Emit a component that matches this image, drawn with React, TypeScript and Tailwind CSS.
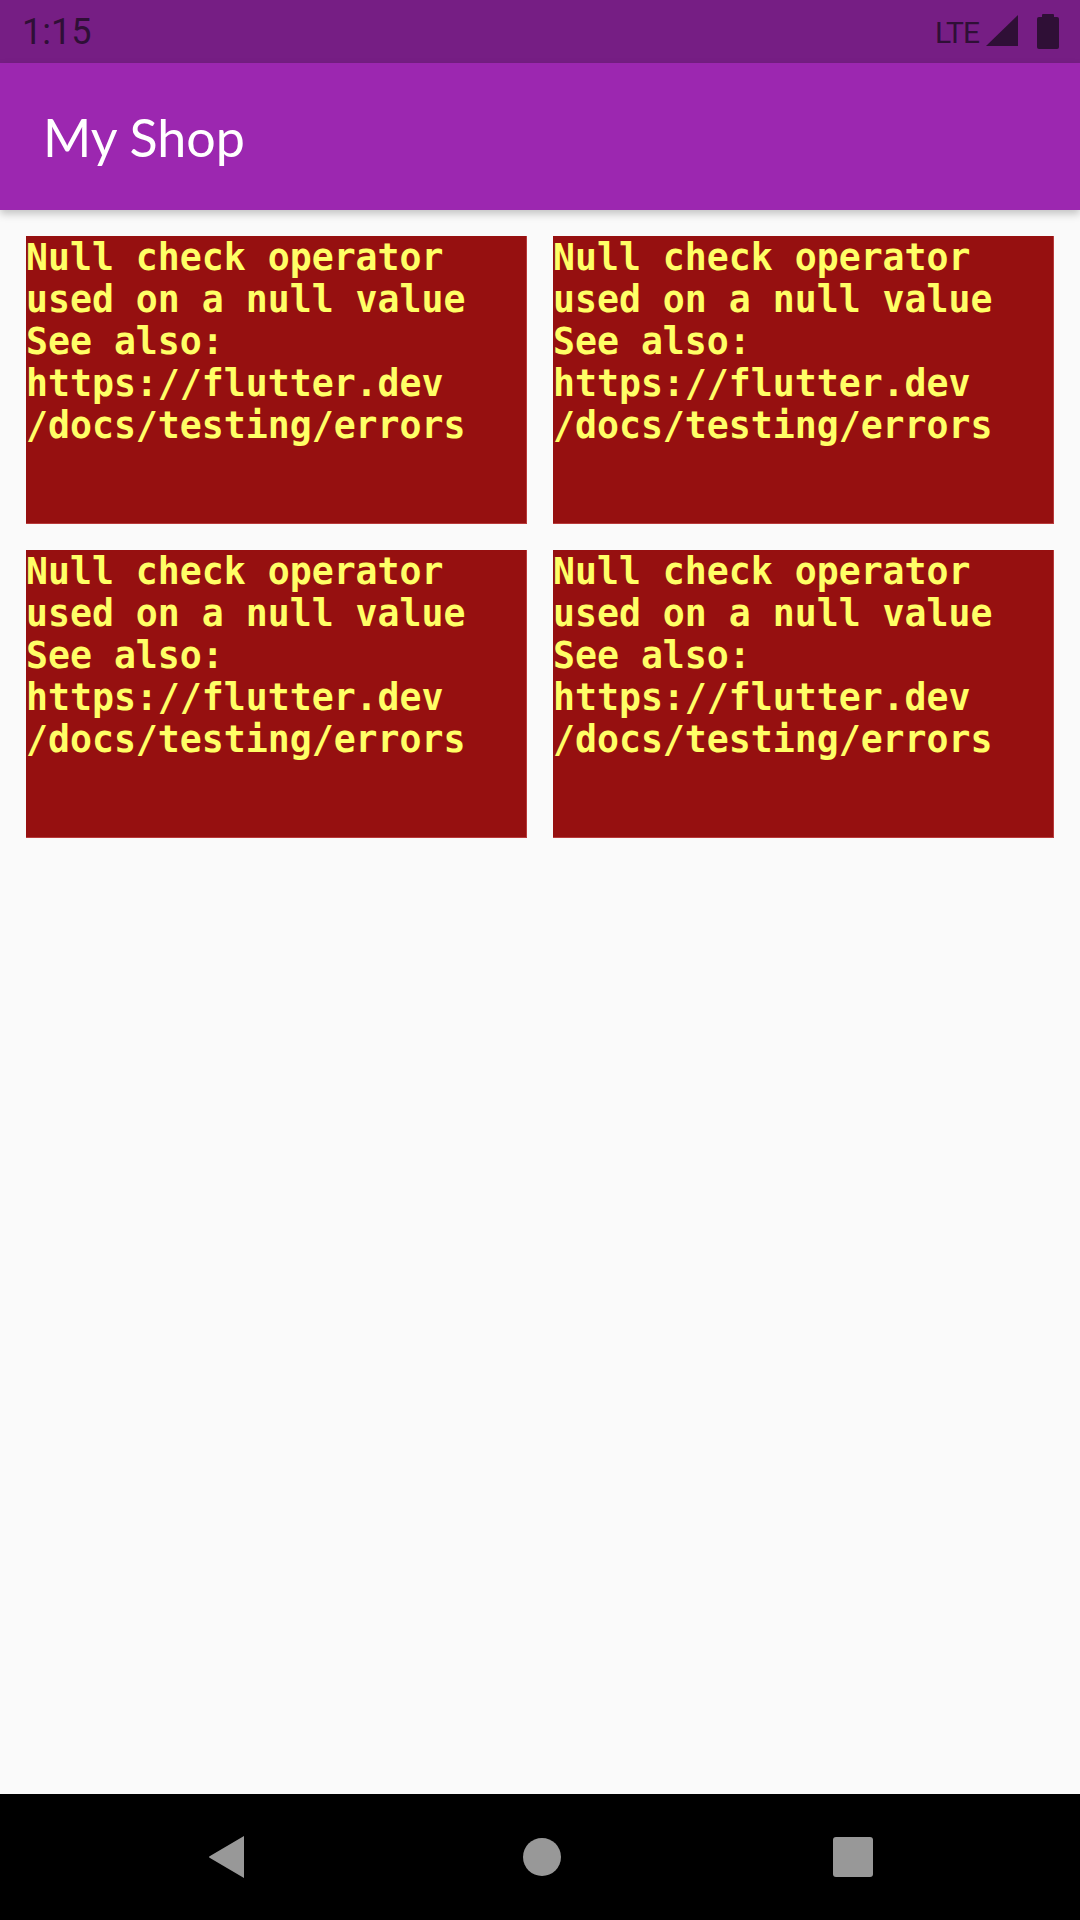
import React from 'react';

const ERROR_TEXT = [
  'Null check operator',
  'used on a null value',
  'See also:',
  'https://flutter.dev',
  '/docs/testing/errors',
];

function ErrorCard() {
  return (
    <div className="h-[288px] bg-[#961010] border-r border-b border-[#b83a3a] overflow-hidden">
      <div
        className="text-[36.5px] leading-[34px] pt-[1px] font-bold text-[#ffff66] whitespace-pre"
        style={{ fontFamily: '"DejaVu Sans Mono", "Liberation Mono", monospace' }}
      >
        {ERROR_TEXT.map((line) => (
          <div key={line} className="h-[42px] flex items-center">
            {line}
          </div>
        ))}
      </div>
    </div>
  );
}

export default function App() {
  return (
    <div className="w-[1080px] h-[1920px] flex flex-col bg-[#fafafa] overflow-hidden">
      {/* status bar */}
      <div className="h-[63px] bg-[#761e84] flex items-center justify-between pl-[22px] pr-[21px] text-[#2f0f36]">
        <span className="text-[36px] leading-none" style={{ fontFamily: 'Roboto, sans-serif' }}>
          1:15
        </span>
        <div className="flex items-center gap-[6px]">
          <span className="text-[30px] leading-none tracking-[-1px] mt-[2px]" style={{ fontFamily: 'Roboto, sans-serif' }}>
            LTE
          </span>
          <svg width="34" height="32" viewBox="0 0 34 32" className="mb-[1px]">
            <path d="M33 0 L33 31 L1 31 Z" fill="#2f0f36" />
          </svg>
          <svg width="22" height="35" viewBox="0 0 22 35" className="ml-[12px]">
            <rect x="5" y="0" width="12" height="5" rx="1" fill="#2f0f36" />
            <rect x="0" y="3" width="22" height="32" rx="2" fill="#2f0f36" />
          </svg>
        </div>
      </div>

      {/* app bar */}
      <div className="h-[147px] bg-[#9c27b0] flex items-center pl-[43px] shadow-[0_4px_8px_rgba(0,0,0,0.22)] z-10">
        <h1 className="text-[52px] text-white leading-none" style={{ fontFamily: 'Lato, sans-serif' }}>
          My Shop
        </h1>
      </div>

      {/* product grid */}
      <div className="flex-1">
        <div className="grid grid-cols-2 gap-[26px] p-[26px]">
          <ErrorCard />
          <ErrorCard />
          <ErrorCard />
          <ErrorCard />
        </div>
      </div>

      {/* nav bar */}
      <div className="h-[126px] bg-black flex items-center justify-center">
        <svg width="38" height="44" viewBox="0 0 38 44">
          <path d="M36 1 L36 43 L2 23 Q0 22 2 21 Z" fill="#989898" strokeLinejoin="round" />
        </svg>
        <div className="ml-[277px] w-[38px] h-[38px] rounded-full bg-[#989898]" />
        <div className="ml-[272px] w-[40px] h-[40px] rounded-[3px] bg-[#989898]" />
      </div>
    </div>
  );
}
